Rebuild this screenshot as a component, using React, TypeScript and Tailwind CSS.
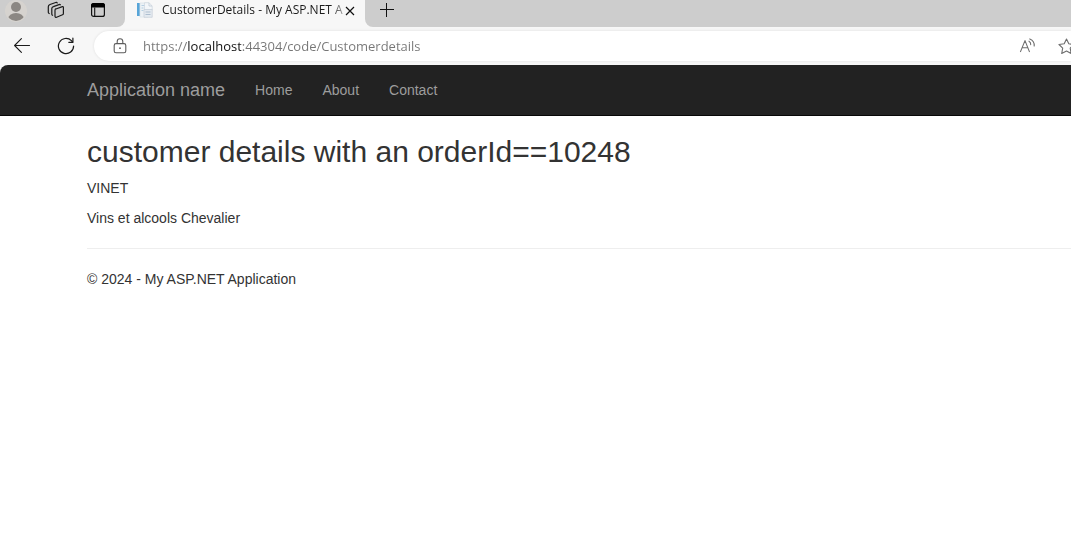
import React from "react";

const navLinks = ["Home", "About", "Contact"];

function ProfileIcon() {
  return (
    <svg width="22" height="22" viewBox="0 0 22 22" aria-hidden="true">
      <defs>
        <clipPath id="avatar">
          <circle cx="11" cy="11" r="10" />
        </clipPath>
      </defs>
      <circle cx="11" cy="11" r="11" fill="#d6d3cf" />
      <g clipPath="url(#avatar)" fill="#8b8783">
        <circle cx="11" cy="7" r="5" />
        <ellipse cx="11" cy="19" rx="8" ry="6" />
      </g>
    </svg>
  );
}

function WorkspacesIcon() {
  return (
    <svg width="18" height="18" viewBox="0 0 18 18" fill="none" stroke="#1b1b1b" strokeWidth="1.2" strokeLinejoin="round" strokeLinecap="round" aria-hidden="true">
      <path d="M8.2 8.2 15.4 5.6Q16.4 5.3 16.4 6.4V12.4Q16.4 13.4 15.5 13.8L9.6 16.3Q8.2 16.8 8 15.4V9.4Q8 8.5 8.6 8.1Z" />
      <path d="M13.4 3.8 12.7 3.4 6.4 5.6Q4.8 6.1 4.8 7.6V13.2Q4.8 14 5.6 14.3" />
      <path d="M10.3 1.9 9.4 1.3 3 3.5Q1.3 4.1 1.3 5.8V11.2Q1.3 12 2.2 12.5" />
    </svg>
  );
}

function TabActionsIcon() {
  return (
    <svg width="16" height="16" viewBox="0 0 16 16" fill="none" aria-hidden="true">
      <rect x="1.6" y="1.6" width="12.8" height="12.8" rx="2" stroke="#111" strokeWidth="1.2" />
      <path d="M1 5.5V3.5Q1 1 3.5 1H12.5Q15 1 15 3.5V5.5Z" fill="#000" />
      <path d="M4.7 5.5V14.4" stroke="#111" strokeWidth="1.1" />
    </svg>
  );
}

function PageIcon() {
  return (
    <svg width="16" height="16" viewBox="0 0 16 16" aria-hidden="true">
      <rect x="0" y="1" width="3" height="13" fill="#57a5d8" />
      <path d="M3 1H11V15H3Z" fill="#edf2f6" stroke="#dbe3ea" strokeWidth=".8" />
      <path d="M4.5 3.5H8M4.5 6H6.5M4.5 8.5H6.5" stroke="#b5cfe2" />
      <path d="M7.5 .7H12L15.2 4V8H7.5Z" fill="#f3f6f9" stroke="#cdd5de" strokeWidth=".7" />
      <path d="M12 .8V4H15" fill="none" stroke="#b9c4d0" strokeWidth=".7" />
      <path d="M7 7.5H15.2V15.3H7Z" fill="#e4eaf0" stroke="#c5ced8" strokeWidth=".7" />
      <path d="M8.5 10H13.5M8.5 12.5H13.5" stroke="#aebfd0" />
    </svg>
  );
}

function CloseIcon() {
  return (
    <svg width="10" height="10" viewBox="0 0 10 10" fill="none" stroke="#111" strokeWidth="1.2" aria-hidden="true">
      <path d="M1 1 9 9M9 1 1 9" />
    </svg>
  );
}

function PlusIcon() {
  return (
    <svg width="14" height="14" viewBox="0 0 14 14" fill="none" stroke="#111" strokeWidth="1" aria-hidden="true">
      <path d="M0 6.5H14M6.5 0V14" />
    </svg>
  );
}

function BackIcon() {
  return (
    <svg width="16" height="16" viewBox="0 0 16 16" fill="none" stroke="#1b1b1b" strokeWidth="1.1" strokeLinecap="round" strokeLinejoin="round" aria-hidden="true">
      <path d="M15.5 7.5H.6M7.4 .7.6 7.5 7.4 14.3" />
    </svg>
  );
}

function ReloadIcon() {
  return (
    <svg width="18" height="18" viewBox="0 0 18 18" fill="none" stroke="#1b1b1b" strokeWidth="1.2" strokeLinecap="round" strokeLinejoin="round" aria-hidden="true">
      <path d="M16.6 9A7.6 7.6 0 1 1 14.4 3.7L15.6 5.2" />
      <path d="M15.9 1.2V5.3H11.8" />
    </svg>
  );
}

function LockIcon() {
  return (
    <svg width="14" height="16" viewBox="0 0 14 16" fill="none" stroke="#5c5c5c" strokeWidth="1.1" aria-hidden="true">
      <rect x="1.2" y="5.6" width="11.6" height="9.2" rx="1.8" />
      <path d="M4.2 5.6V3.6A2.8 2.8 0 0 1 9.8 3.6V5.6" />
      <circle cx="7" cy="10.2" r=".9" fill="#5c5c5c" stroke="none" />
    </svg>
  );
}

function ReadAloudIcon() {
  return (
    <svg width="17" height="16" viewBox="0 0 17 16" fill="none" stroke="#6e6e6e" strokeWidth="1.1" strokeLinecap="round" strokeLinejoin="round" aria-hidden="true">
      <path d="M1.5 13.6 6 2.6 10.4 13.6M3.1 9.8H8.8" />
      <path d="M10 3.2Q12 4.4 11.7 6.6" />
      <path d="M10.8 .9Q15.6 2.8 15.2 8" />
    </svg>
  );
}

function StarIcon() {
  return (
    <svg width="17" height="17" viewBox="0 0 17 17" fill="none" stroke="#6e6e6e" strokeWidth="1.1" strokeLinejoin="round" aria-hidden="true">
      <path d="M8.5 1 10.8 5.8 16 6.5 12.2 10.1 13.1 15.5 8.5 13 3.7 15.5 4.7 10.1 1 6.5 6.2 5.8Z" />
    </svg>
  );
}

function TabStrip() {
  return (
    <div className="flex h-[27px] bg-[#f7f7f7] font-['Open_Sans','Noto_Sans',sans-serif]">
      <div className="flex w-[125px] shrink-0 items-start rounded-br-lg bg-[#cdcdcd] pl-[5px]">
        <button type="button" aria-label="Profile"><ProfileIcon /></button>
        <button type="button" aria-label="Workspaces" className="ml-5 mt-px"><WorkspacesIcon /></button>
        <button type="button" aria-label="Tab actions menu" className="ml-[25px] mt-0.5"><TabActionsIcon /></button>
      </div>
      <div className="flex w-60 shrink-0 items-start pl-3 pr-[10px] pt-0.5">
        <PageIcon />
        <span className="ml-[9px] min-w-0 flex-1 whitespace-nowrap text-xs text-[#1b1b1b] [mask-image:linear-gradient(to_right,#000_93%,transparent_105%)]">
          CustomerDetails - My ASP.NET A
        </span>
        <button type="button" aria-label="Close tab" className="ml-0.5 mt-1 shrink-0"><CloseIcon /></button>
      </div>
      <div className="flex flex-1 items-start rounded-bl-lg bg-[#cdcdcd] pl-[15px] pt-[3px]">
        <button type="button" aria-label="New tab"><PlusIcon /></button>
      </div>
    </div>
  );
}

function AddressBar() {
  return (
    <div className="flex h-[38px] items-center overflow-hidden bg-[#f7f7f7] pl-[14px]">
      <button type="button" aria-label="Back"><BackIcon /></button>
      <button type="button" aria-label="Reload" className="ml-[27px]"><ReloadIcon /></button>
      <div className="ml-[19px] flex h-[30px] min-w-0 flex-1 items-center rounded-l-full bg-white pl-[19px] shadow-[0_0_3px_rgba(0,0,0,0.1)]">
        <button type="button" aria-label="View site information"><LockIcon /></button>
        <input
          type="text"
          aria-label="Address"
          defaultValue="https://localhost:44304/code/Customerdetails"
          className="ml-4 min-w-0 flex-1 bg-[linear-gradient(to_right,#767676_45px,#111_45px,#111_98px,#767676_98px)] bg-clip-text font-['Open_Sans','Noto_Sans',sans-serif] text-[13px] leading-5 text-transparent caret-black outline-none"
        />
        <button type="button" aria-label="Read aloud" className="ml-4 shrink-0"><ReadAloudIcon /></button>
        <button type="button" aria-label="Add to favorites" className="-mr-1 ml-[22px] shrink-0"><StarIcon /></button>
      </div>
    </div>
  );
}

export default function App() {
  return (
    <div className="min-h-screen bg-white font-['Liberation_Sans',Arial,sans-serif] text-sm leading-5 text-[#333]">
      <TabStrip />
      <AddressBar />
      <div className="bg-[#f7f7f7]">
        <nav className="flex h-[51px] items-center rounded-tl-lg border-b border-[#080808] bg-[#222] pl-[87px] text-[#9d9d9d]">
          <a href="#" className="mr-[15px] text-lg leading-5">Application name</a>
          {navLinks.map((label) => (
            <a key={label} href="#" className="px-[15px]">{label}</a>
          ))}
        </nav>
      </div>
      <div className="pl-[87px]">
        <main className="pt-5">
          <h2 className="mb-2.5 text-3xl leading-8">customer details with an orderId==10248</h2>
          <p className="mb-2.5">VINET</p>
          <p>Vins et alcools Chevalier</p>
        </main>
        <hr className="my-5 border-[#eee]" />
        <footer>
          <p>© 2024 - My ASP.NET Application</p>
        </footer>
      </div>
    </div>
  );
}
